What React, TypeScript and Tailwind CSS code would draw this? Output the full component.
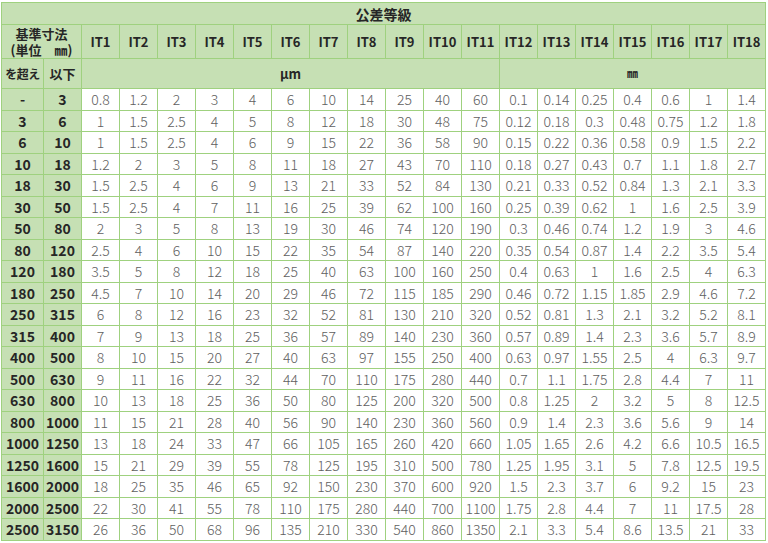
const rows: [string, string, string[]][] = [
  ["-", "3", ["0.8","1.2","2","3","4","6","10","14","25","40","60","0.1","0.14","0.25","0.4","0.6","1","1.4"]],
  ["3", "6", ["1","1.5","2.5","4","5","8","12","18","30","48","75","0.12","0.18","0.3","0.48","0.75","1.2","1.8"]],
  ["6", "10", ["1","1.5","2.5","4","6","9","15","22","36","58","90","0.15","0.22","0.36","0.58","0.9","1.5","2.2"]],
  ["10", "18", ["1.2","2","3","5","8","11","18","27","43","70","110","0.18","0.27","0.43","0.7","1.1","1.8","2.7"]],
  ["18", "30", ["1.5","2.5","4","6","9","13","21","33","52","84","130","0.21","0.33","0.52","0.84","1.3","2.1","3.3"]],
  ["30", "50", ["1.5","2.5","4","7","11","16","25","39","62","100","160","0.25","0.39","0.62","1","1.6","2.5","3.9"]],
  ["50", "80", ["2","3","5","8","13","19","30","46","74","120","190","0.3","0.46","0.74","1.2","1.9","3","4.6"]],
  ["80", "120", ["2.5","4","6","10","15","22","35","54","87","140","220","0.35","0.54","0.87","1.4","2.2","3.5","5.4"]],
  ["120", "180", ["3.5","5","8","12","18","25","40","63","100","160","250","0.4","0.63","1","1.6","2.5","4","6.3"]],
  ["180", "250", ["4.5","7","10","14","20","29","46","72","115","185","290","0.46","0.72","1.15","1.85","2.9","4.6","7.2"]],
  ["250", "315", ["6","8","12","16","23","32","52","81","130","210","320","0.52","0.81","1.3","2.1","3.2","5.2","8.1"]],
  ["315", "400", ["7","9","13","18","25","36","57","89","140","230","360","0.57","0.89","1.4","2.3","3.6","5.7","8.9"]],
  ["400", "500", ["8","10","15","20","27","40","63","97","155","250","400","0.63","0.97","1.55","2.5","4","6.3","9.7"]],
  ["500", "630", ["9","11","16","22","32","44","70","110","175","280","440","0.7","1.1","1.75","2.8","4.4","7","11"]],
  ["630", "800", ["10","13","18","25","36","50","80","125","200","320","500","0.8","1.25","2","3.2","5","8","12.5"]],
  ["800", "1000", ["11","15","21","28","40","56","90","140","230","360","560","0.9","1.4","2.3","3.6","5.6","9","14"]],
  ["1000", "1250", ["13","18","24","33","47","66","105","165","260","420","660","1.05","1.65","2.6","4.2","6.6","10.5","16.5"]],
  ["1250", "1600", ["15","21","29","39","55","78","125","195","310","500","780","1.25","1.95","3.1","5","7.8","12.5","19.5"]],
  ["1600", "2000", ["18","25","35","46","65","92","150","230","370","600","920","1.5","2.3","3.7","6","9.2","15","23"]],
  ["2000", "2500", ["22","30","41","55","78","110","175","280","440","700","1100","1.75","2.8","4.4","7","11","17.5","28"]],
  ["2500", "3150", ["26","36","50","68","96","135","210","330","540","860","1350","2.1","3.3","5.4","8.6","13.5","21","33"]],
]

const grades = Array.from({ length: 18 }, (_, i) => `IT${i + 1}`)

export default function App(){

return(

<div className="w-[768px] h-[543px] bg-white pt-[2px] pl-px font-['Noto_Sans_CJK_JP','Noto_Sans',sans-serif]">

<table className="table-fixed border-collapse w-[764px] text-center">

<colgroup>
<col className="w-[42px]"/>
<col className="w-[38px]"/>
{grades.map(g => <col key={g} className="w-[38px]"/>)}
</colgroup>

<thead className="bg-[#c6e0b4] text-[#262626] font-bold">

{/* TITLE */}
<tr className="h-[22px]">
<th colSpan={20} className="border border-[#9fd17f] text-[14px] leading-none p-0">
公差等級
</th>
</tr>

{/* GRADES */}
<tr className="h-[34px]">
<th colSpan={2} className="border border-[#9fd17f] p-0">
<div className="text-[13px] leading-[16px] whitespace-nowrap">基準寸法</div>
<div className="text-[13px] leading-[16px] whitespace-nowrap">(単位　㎜)</div>
</th>
{grades.map(g => (
<th key={g} className="border border-[#9fd17f] text-[13px] leading-none p-0 whitespace-nowrap">
{g}
</th>
))}
</tr>

{/* UNITS */}
<tr className="h-[30px]">
<th className="border border-[#9fd17f] text-[12px] leading-none p-0 whitespace-nowrap tracking-[-0.5px]">を超え</th>
<th className="border border-[#9fd17f] text-[13px] leading-none p-0">以下</th>
<th colSpan={11} className="border border-[#9fd17f] text-[13px] leading-none p-0">µm</th>
<th colSpan={7} className="border border-[#9fd17f] text-[11px] leading-none p-0">㎜</th>
</tr>

</thead>

<tbody>

{rows.map(([from, to, vals]) => (
<tr key={to} className="h-[21.5px]">
<td className="border border-[#9fd17f] bg-[#c6e0b4] text-[#262626] font-bold text-[14px] leading-none p-0">{from}</td>
<td className="border border-[#9fd17f] bg-[#c6e0b4] text-[#262626] font-bold text-[14px] leading-none p-0">{to}</td>
{vals.map((v, i) => (
<td key={i} className="border border-[#9fd17f] text-[#606060] font-light text-[14px] leading-none p-0 whitespace-nowrap">{v}</td>
))}
</tr>
))}

</tbody>

</table>

</div>

)

}
